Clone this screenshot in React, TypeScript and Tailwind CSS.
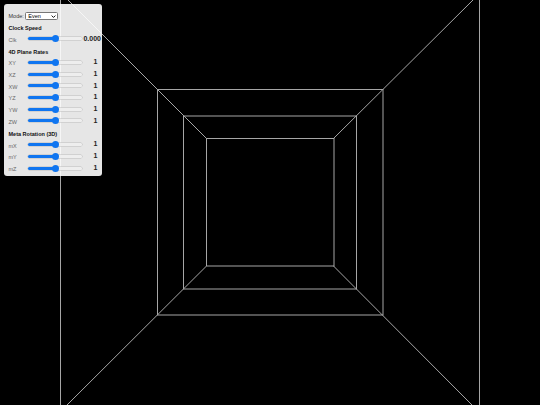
const planeRates = ["XY", "XZ", "XW", "YZ", "YW", "ZW"];
const metaRates = ["mX", "mY", "mZ"];

const squares = [
  { x: 157.5, y: 89.5, size: 225.5 },
  { x: 183.5, y: 116, size: 173 },
  { x: 206.5, y: 138.5, size: 127.5 },
];

const edges = [
  [206.5, 138.5, 68, 0],
  [333.5, 138.5, 473, 0],
  [206.5, 266, 67, 405],
  [333.5, 266, 472, 405],
  [60.5, 0, 60.5, 405],
  [479.5, 0, 479.5, 405],
];

function Slider({ label, value, wide }: { label: string; value: string; wide?: boolean }) {
  return (
    <div className="flex h-[11.7px] items-center">
      <span className="w-[19.5px] pt-[2px] text-[5.5px] text-[#666]">{label}</span>
      <input
        type="range"
        min={0}
        max={2}
        step={0.01}
        defaultValue={1}
        className="h-[7px] w-[54px] cursor-pointer appearance-none bg-transparent [&::-webkit-slider-runnable-track]:h-[3px] [&::-webkit-slider-runnable-track]:rounded-full [&::-webkit-slider-runnable-track]:bg-[linear-gradient(to_right,#0f75f0_50%,#eeeeee_50%)] [&::-webkit-slider-runnable-track]:shadow-[0_0_0_0.5px_#bbbbbb] [&::-webkit-slider-thumb]:mt-[-2px] [&::-webkit-slider-thumb]:h-[7px] [&::-webkit-slider-thumb]:w-[7px] [&::-webkit-slider-thumb]:appearance-none [&::-webkit-slider-thumb]:rounded-full [&::-webkit-slider-thumb]:bg-[#0f75f0]"
      />
      <span
        className={`ml-auto text-right text-[7px] font-bold whitespace-nowrap text-[#222] ${wide ? "-mr-[3.5px]" : ""}`}
      >
        {value}
      </span>
    </div>
  );
}

function Heading({ children }: { children: string }) {
  return <h3 className="mt-[2px] h-[10px] text-[5.5px] leading-[10px] font-bold text-[#111]">{children}</h3>;
}

export default function App() {
  return (
    <div className="relative h-[405px] w-[540px] overflow-hidden bg-black font-['Liberation_Sans',sans-serif]">
      <svg width={540} height={405} className="absolute inset-0" fill="none" stroke="#a6a6a6" strokeWidth={1}>
        {squares.map((s) => (
          <rect key={s.size} x={s.x} y={s.y} width={s.size} height={s.size} />
        ))}
        {edges.map((e, i) => (
          <line key={i} x1={e[0]} y1={e[1]} x2={e[2]} y2={e[3]} />
        ))}
      </svg>

      <div className="absolute top-[4px] left-[4px] h-[172px] w-[98px] rounded-[3px] bg-white/90 px-[4.5px] pt-[8px]">
        <div className="flex h-[8px] items-center gap-[1.5px]">
          <span className="text-[5.5px] text-[#333]">Mode:</span>
          <div className="relative h-[8px] w-[33px]">
            <select className="block h-[8px] min-h-0 w-[33px] appearance-none rounded-[1.5px] border-[0.5px] border-[#777] bg-white py-0 pl-[2px] text-[5.5px] leading-[7px] text-black">
              <option>Even</option>
              <option>Odd</option>
            </select>
            <svg viewBox="0 0 8 8" className="pointer-events-none absolute top-[1.5px] right-[2px] h-[5px] w-[5px]" fill="none" stroke="#111" strokeWidth={1.6}>
              <path d="M1 2.5 4 5.5 7 2.5" />
            </svg>
          </div>
        </div>
        <div className="mt-[3px]">
          <Heading>Clock Speed</Heading>
          <Slider label="Clk" value="0.000" wide />
        </div>
        <div className="mt-[0.6px]">
          <Heading>4D Plane Rates</Heading>
          {planeRates.map((r) => (
            <Slider key={r} label={r} value="1" />
          ))}
        </div>
        <div className="mt-0">
          <Heading>Meta Rotation (3D)</Heading>
          {metaRates.map((r) => (
            <Slider key={r} label={r} value="1" />
          ))}
        </div>
      </div>
    </div>
  );
}
